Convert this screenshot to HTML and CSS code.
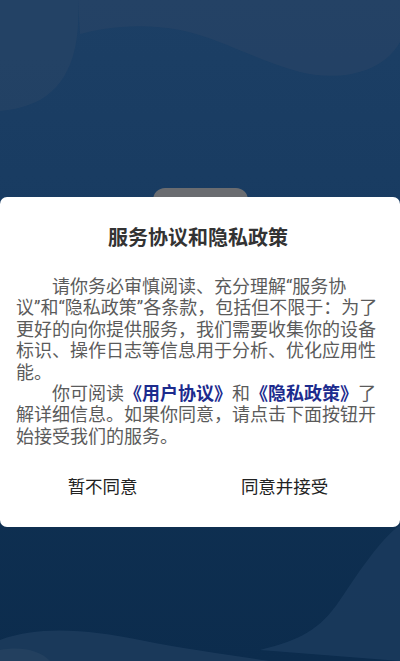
FILE: index.html
```html
<!DOCTYPE html>
<html lang="zh-CN">
<head>
  <meta charset="UTF-8">
  <title>服务协议和隐私政策</title>
  <meta name="viewport" content="width=device-width, initial-scale=1.0">
  <link rel="stylesheet" href="styles.css">
</head>
<body>
  <div class="screen">
    <svg class="waves" viewBox="0 0 400 661" preserveAspectRatio="none">
      <path d="M0 0 H78 C80 40 74 80 40 100 C24 108 10 110 0 111 Z" fill="#2a4566" opacity="0.55"/>
      <path d="M78 0 H400 V42 C380 78 330 80 300 72 C250 58 220 38 180 30 C140 22 100 28 80 34 Z" fill="#2a4566" opacity="0.6"/>
      <path d="M400 525 C380 540 360 570 340 600 C320 630 300 640 260 650 L400 661 Z" fill="#1a3a5c" opacity="0.9"/>
      <path d="M0 640 C40 625 90 630 140 640 C190 650 230 655 270 661 H0 Z" fill="#1c3b5c" opacity="0.9"/>
      <path d="M0 650 C20 646 40 650 50 661 H0 Z" fill="#23405f"/>
    </svg>

    <div class="logo"></div>

    <div class="dialog">
      <div class="title">服务协议和隐私政策</div>
      <p class="body">
        <span class="indent"></span>请你务必审慎阅读、充分理解“服务协<br>议”和“隐私政策”各条款，包括但不限于：为了<br>更好的向你提供服务，我们需要收集你的设备<br>标识、操作日志等信息用于分析、优化应用性<br>能。<br>
        <span class="indent"></span>你可阅读<a href="#" class="link">《用户协议》</a>和<a href="#" class="link">《隐私政策》</a>了<br>解详细信息。如果你同意，请点击下面按钮开<br>始接受我们的服务。
      </p>
      <div class="actions">
        <button class="btn">暂不同意</button>
        <button class="btn">同意并接受</button>
      </div>
    </div>
  </div>
</body>
</html>
```

FILE: styles.css
```css
html, body {
  margin: 0;
  padding: 0;
  height: 100%;
  font-family: Roboto, "Noto Sans CJK SC", sans-serif;
}
.screen {
  position: relative;
  height: 661px;
  overflow: hidden;
  background: linear-gradient(180deg, #1c3f65 0%, #183b61 35%, #0f3052 70%, #0c2c4d 100%);
  display: flex;
  flex-direction: column;
  align-items: center;
}
.waves {
  position: absolute;
  left: 0;
  top: 0;
  width: 400px;
  height: 661px;
}
.logo {
  position: relative;
  margin-top: 188px;
  width: 95px;
  height: 12px;
  background: #6a6c70;
  border-radius: 14px 14px 0 0;
}
.dialog {
  position: relative;
  margin-top: -3px;
  width: 400px;
  box-sizing: border-box;
  background: #fff;
  border-radius: 7px;
  padding: 29px 20px 20px 16px;
}
.title {
  text-align: center;
  font-size: 20px;
  line-height: 24px;
  font-weight: bold;
  color: #333;
}
.body {
  margin: 26px 0 0;
  font-size: 18px;
  line-height: 21.4px;
  color: #5b5b5b;
}
.indent {
  display: inline-block;
  width: 36px;
}
.link {
  color: #1c2b8e;
  font-weight: bold;
  text-decoration: none;
}
.actions {
  display: flex;
  justify-content: space-around;
  margin-top: 16px;
}
.btn {
  background: none;
  border: none;
  padding: 0;
  height: 44px;
  font-family: inherit;
  font-size: 17.5px;
  color: #222;
}
```
